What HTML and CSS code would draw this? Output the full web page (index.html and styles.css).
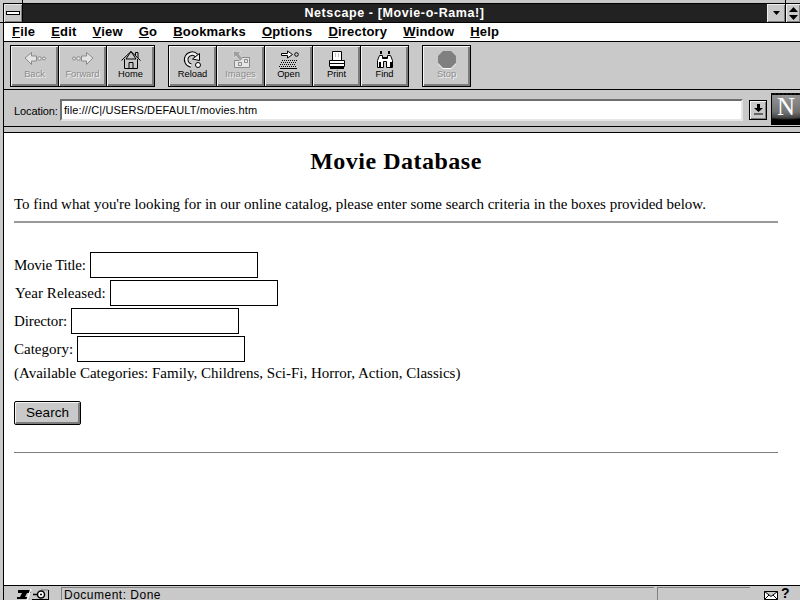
FILE: index.html
```html
<!DOCTYPE html>
<html lang="en">
<head>
<meta charset="utf-8">
<title>Netscape - [Movie-o-Rama!]</title>
<link rel="stylesheet" href="styles.css">
</head>
<body>
<div class="window">
  <div class="frame-top"><span class="ft-a"></span><span class="ft-b"></span><span class="ft-c"></span></div>
  <div class="frame-notch"></div>
  <div class="inner">
    <header class="titlebar">
      <div class="sysbtn"><span class="sysbar"></span></div>
      <div class="title">Netscape - [Movie-o-Rama!]</div>
      <div class="capbtn"><svg width="9" height="6" viewBox="0 0 9 6"><path d="M1 1h7L4.500 5z" fill="#000"/></svg></div>
      <div class="capbtn last"><svg width="9" height="13" viewBox="0 0 9 13"><path d="M4.500 0L9 5H0zM4.500 13L0 8h9z" fill="#000"/></svg></div>
    </header>
    <nav class="menubar">
      <span><u>F</u>ile</span><span><u>E</u>dit</span><span><u>V</u>iew</span><span><u>G</u>o</span><span><u>B</u>ookmarks</span><span><u>O</u>ptions</span><span><u>D</u>irectory</span><span><u>W</u>indow</span><span><u>H</u>elp</span>
    </nav>
    <div class="toolbar">
      <div class="group">
        <div class="tool off">
          <svg class="ico" viewBox="0 0 24 20"><path d="M2 8l6.500-5.500v3.500h5v5h-5v3.500z" fill="#e4e4e4" stroke="#8a8a8a"/><circle cx="16.500" cy="8.500" r="1.800" fill="#e4e4e4" stroke="#8a8a8a"/><circle cx="21" cy="8.500" r="1.500" fill="#e4e4e4" stroke="#8a8a8a"/></svg>
          <span>Back</span>
        </div>
        <div class="tool off">
          <svg class="ico" viewBox="0 0 24 20"><path d="M22 8l-6.500-5.500v3.500h-5v5h5v3.500z" fill="#e4e4e4" stroke="#8a8a8a"/><circle cx="7.500" cy="8.500" r="1.800" fill="#e4e4e4" stroke="#8a8a8a"/><circle cx="3" cy="8.500" r="1.500" fill="#e4e4e4" stroke="#8a8a8a"/></svg>
          <span>Forward</span>
        </div>
        <div class="tool">
          <svg class="ico" viewBox="0 0 24 20"><path d="M2.500 10.500L12 1.500l9.500 9M16.500 5.500v-3h2.500v5.500M5.500 9v9.500h13V9M10 18.500v-6h4v6M12 1.500L7 9h10z" fill="none" stroke="#000"/></svg>
          <span>Home</span>
        </div>
      </div>
      <div class="group">
        <div class="tool">
          <svg class="ico" viewBox="0 0 24 20"><path d="M15.500 5.500A6 6 0 1 0 10 15.500" fill="none" stroke="#000" stroke-width="4.500"/><path d="M15.500 5.500A6 6 0 1 0 10 15.500" fill="none" stroke="#eee" stroke-width="2.500"/><path d="M11.500 9l7-5.500v7z" fill="#eee" stroke="#000"/><circle cx="17" cy="15" r="2.500" fill="#fff" stroke="#000"/></svg>
          <span>Reload</span>
        </div>
        <div class="tool off">
          <svg class="ico" viewBox="0 0 24 20"><path d="M11.500 7.500h9v10h-15v-7h6z" fill="#e6e6e6" stroke="#8a8a8a"/><path d="M4 1l8 1-2 2 4 5-3 2-4-5-2 2z" fill="#a0a0a0" stroke="#e6e6e6" stroke-width=".6"/><path d="M9.500 12.500h3v3h-3zM15.500 9.500h3v3h-3z" fill="none" stroke="#8a8a8a"/></svg>
          <span>Images</span>
        </div>
        <div class="tool">
          <svg class="ico" viewBox="0 0 24 20"><path d="M4.500 3.500h6V1l5 3.500L10.500 8V5.500h-6z" fill="#fff" stroke="#000"/><circle cx="19.500" cy="4.500" r="1.800" fill="none" stroke="#000"/><path d="M5 10.500h16M4 12.500h16M3 14.500h16M2 16.500h18" stroke="#000" stroke-dasharray="1 1" fill="none"/><path d="M3 18.500h17" stroke="#000"/></svg>
          <span>Open</span>
        </div>
        <div class="tool">
          <svg class="ico" viewBox="0 0 24 20"><path d="M7.500 1.500h9v9h-9z" fill="#fff" stroke="#000"/><path d="M10 4h1M13 4h1M10 6h1M13 6h1" stroke="#888"/><path d="M4.500 10.500h15v6h-15z" fill="#fff" stroke="#000"/><path d="M4.500 13.500h15" stroke="#000"/><path d="M5 18h14" stroke="#000" stroke-width="2"/></svg>
          <span>Print</span>
        </div>
        <div class="tool">
          <svg class="ico" viewBox="0 0 24 20"><path d="M6.500 5.500h3v3h5v-3h3l2 5v7h-6v-6h-3v6h-6v-7z" fill="#fff" stroke="#000"/><path d="M7 1h2v3H7zM15 1h2v3h-2z" fill="#000"/><path d="M10 7h4v2h-4zM6 12h2v5H6zM17 12h2v5h-2z" fill="#000"/></svg>
          <span>Find</span>
        </div>
      </div>
      <div class="group">
        <div class="tool off">
          <svg class="ico" viewBox="0 0 24 20"><path d="M8 2h8l5 5v7l-5 5H8l-5-5V7z" fill="#fff"/><path d="M8 1h8l5 5v7l-5 5H8l-5-5V6z" fill="#808080"/></svg>
          <span>Stop</span>
        </div>
      </div>
    </div>
    <div class="location">
      <label class="loc-label">Location:</label>
      <div class="loc-field">file:///C|/USERS/DEFAULT/movies.htm</div>
      <div class="loc-drop"><svg width="9" height="11" viewBox="0 0 9 11"><path d="M3 0h3v4h3L4.500 8 0 4h3z" fill="#000"/><path d="M0 10h9" stroke="#000"/></svg></div>
      <div class="logo"><span class="logo-n">N</span></div>
    </div>
    <div class="strip"></div>
    <main class="content">
      <h1>Movie Database</h1>
      <p class="intro">To find what you're looking for in our online catalog, please enter some search criteria in the boxes provided below.</p>
      <hr class="rule">
      <form class="form">
        <div class="row"><label class="lbl-title">Movie Title:</label><input type="text"></div>
        <div class="row"><label class="lbl-year">Year Released:</label><input type="text"></div>
        <div class="row"><label class="lbl-director">Director:</label><input type="text"></div>
        <div class="row"><label>Category:</label><input type="text"></div>
        <p class="avail">(Available Categories: Family, Childrens, Sci-Fi, Horror, Action, Classics)</p>
        <button class="search" type="button">Search</button>
      </form>
      <hr class="rule last-rule">
    </main>
    <footer class="status">
      <div class="sec">
        <svg width="15" height="11" viewBox="0 0 15 11"><path d="M1 1h13v3H10L8 8h3v2H0V8h3l2-4H1z" fill="#000"/><path d="M14 0l-4 11" stroke="#fff" stroke-width="1.500"/></svg>
        <svg width="17" height="11" viewBox="0 0 17 11"><path d="M0 10.500h17M16.500 1v9" stroke="#000"/><path d="M9 1h7" stroke="#808080"/><circle cx="9" cy="5.500" r="3.500" fill="#fff" stroke="#000" stroke-width="1.500"/><circle cx="9" cy="5.500" r="1" fill="#000"/><path d="M1 5.500h4" stroke="#000" stroke-width="1.500"/></svg>
      </div>
      <div class="panel main-panel">Document: Done</div>
      <div class="panel side-panel"></div>
      <div class="tray">
        <svg width="14" height="9" viewBox="0 0 14 9"><path d="M.5.500h13v8H.5zM.5.500L7 5.500l6.500-5M.5 8.500L5 4M13.500 8.500L9 4" fill="#fff" stroke="#000"/></svg>
        <span class="help">?</span>
      </div>
    </footer>
  </div>
</div>
</body>
</html>
```
FILE: styles.css
```css
* { box-sizing: border-box; }
html, body { margin: 0; padding: 0; }
body { width: 800px; height: 600px; overflow: hidden; background: #c9c9c9; }

.window { position: relative; width: 800px; height: 600px; display: flex; flex-direction: column; background: #c9c9c9; overflow: hidden; padding-left: 3px; }

.frame-top { display: flex; height: 3px; margin-left: -3px; }
.ft-a { width: 23px; border-right: 1px solid #000; }
.ft-b { width: 763px; border-right: 1px solid #000; }
.ft-c { flex: 1; }
.frame-notch { position: absolute; left: 0; top: 22px; width: 3px; height: 1px; background: #000; }

.inner { flex: 1; min-height: 0; display: flex; flex-direction: column; border-left: 1px solid #000; border-top: 1px solid #000; }

.titlebar { height: 19px; flex: none; display: flex; background: #222; border-bottom: 1px solid #000; }
.sysbtn { flex: none; width: 19px; height: 18px; background: #c9c9c9; border-right: 1px solid #000; display: flex; align-items: center; justify-content: center; box-shadow: inset 1px 1px 0 #e8e8e8, inset -1px -1px 0 #808080; }
.sysbar { display: block; width: 14px; height: 4px; background: #fff; border: 1px solid #000; }
.title { flex: 1; text-align: center; color: #fff; font: bold 12.500px/18px "Liberation Sans", Arial, sans-serif; letter-spacing: .6px; }
.capbtn { flex: none; width: 19px; height: 18px; background: #c9c9c9; border-left: 1px solid #222; display: flex; align-items: center; justify-content: center; box-shadow: inset 1px 1px 0 #f0f0f0, inset -1px -1px 0 #808080; }
.capbtn.last { width: 15px; border-left: 1px solid #000; }

.menubar { height: 19px; flex: none; display: flex; gap: 16px; background: #fff; border-bottom: 1px solid #000; padding-left: 8px; font: bold 13px/17px "Liberation Sans", Arial, sans-serif; letter-spacing: .2px; color: #000; }

.toolbar { height: 48px; flex: none; display: flex; gap: 14px; padding: 3px 0 0 6px; border-bottom: 1px solid #000; }
.group { display: flex; height: 42px; }
.tool { width: 49px; height: 42px; margin-right: -1px; display: flex; flex-direction: column; align-items: center; padding-top: 4px; background: #c9c9c9; border: 1px solid #000; box-shadow: inset 1px 1px 0 #f4f4f4, inset -2px -2px 0 #7c7c7c; font: 9.300px/11px "Liberation Sans", Arial, sans-serif; color: #000; }
.ico { width: 24px; height: 20px; display: block; flex: none; margin-bottom: -1px; }
.tool.off { color: #8c8c8c; text-shadow: 1px 1px 0 #f2f2f2; }

.location { height: 37px; flex: none; display: flex; align-items: center; padding-left: 10px; border-bottom: 1px solid #000; }
.loc-label { width: 46px; font: 11px/14px "Liberation Sans", Arial, sans-serif; letter-spacing: -.1px; margin-top: 5px; }
.loc-field { width: 684px; height: 22px; margin-top: 3px; background: #fff; border-top: 2px solid #6e6e6e; border-left: 2px solid #6e6e6e; border-bottom: 2px solid #e6e6e6; border-right: 2px solid #e6e6e6; padding-left: 2px; font: 11px/19px "Liberation Sans", Arial, sans-serif; letter-spacing: .12px; color: #000; white-space: nowrap; }
.loc-drop { width: 18px; height: 20px; margin: 3px 0 0 6px; background: #c9c9c9; border: 1px solid #000; box-shadow: inset 1px 1px 0 #f4f4f4, inset -1px -1px 0 #7c7c7c; display: flex; align-items: center; justify-content: center; }
.logo { width: 29px; height: 32px; margin: 1px 0 0 4px; background: radial-gradient(ellipse 60px 25px at 50% 0, #9a9a9a 0, #707070 70%, #444 92%, #000 100%); background-color: #000; border-left: 1px solid #000; border-top: 2px dotted #111; text-align: center; overflow: hidden; }
.logo-n { display: block; color: #fff; font: 25px/23px "Liberation Serif", "Times New Roman", serif; }

.strip { height: 6px; flex: none; border-bottom: 1px solid #000; }

.content { flex: 1; min-height: 0; background: #fff; padding: 0 22px 0 10px; color: #000; font: 15px/19px "Liberation Serif", "Times New Roman", serif; }
.content h1 { margin: 14px 0 0; text-align: center; font: bold 24px/28px "Liberation Serif", "Times New Roman", serif; letter-spacing: .5px; }
.intro { margin: 20px 0 0; letter-spacing: -.02px; }
.rule { margin: 7px 0 0; height: 2px; border: 0; background: #999; }
.form { margin: 0; padding-top: 28px; }
.row { height: 28px; display: flex; align-items: center; gap: 4px; }
.row input { width: 168px; height: 26px; margin: 0; padding: 0 2px; background: #fff; border: 1px solid #000; border-radius: 0; outline: 0; }
.lbl-title { letter-spacing: -.25px; }
.lbl-year { margin-left: 1px; letter-spacing: .08px; }
.lbl-director { letter-spacing: -.12px; }
.avail { margin: 1px 0 0; }
.search { display: block; margin: 18px 0 0; width: 67px; height: 24px; padding: 0; background: #c9c9c9; border: 1px solid #000; border-radius: 2px; box-shadow: inset 1px 1px 0 #f4f4f4, inset -2px -2px 0 #7c7c7c; font: 13.500px/20px "Liberation Sans", Arial, sans-serif; color: #000; }
.last-rule { margin-top: 27px; height: 1px; background: #808080; }

.status { height: 15px; flex: none; display: flex; border-top: 1px solid #000; padding-top: 1px; font: 12px/10px "Liberation Sans", Arial, sans-serif; letter-spacing: .5px; }
.sec { width: 57px; display: flex; align-items: flex-end; padding-left: 13px; flex: none; }
.panel { height: 13px; border-left: 1px solid #808080; border-top: 1px solid #808080; padding-top: 2px; }
.main-panel { width: 593px; padding-left: 2px; }
.side-panel { width: 93px; margin-left: 3px; }
.tray { display: flex; align-items: flex-end; gap: 3px; padding-left: 14px; }
.help { font: bold 14px/13px "Liberation Sans", Arial, sans-serif; }
```
